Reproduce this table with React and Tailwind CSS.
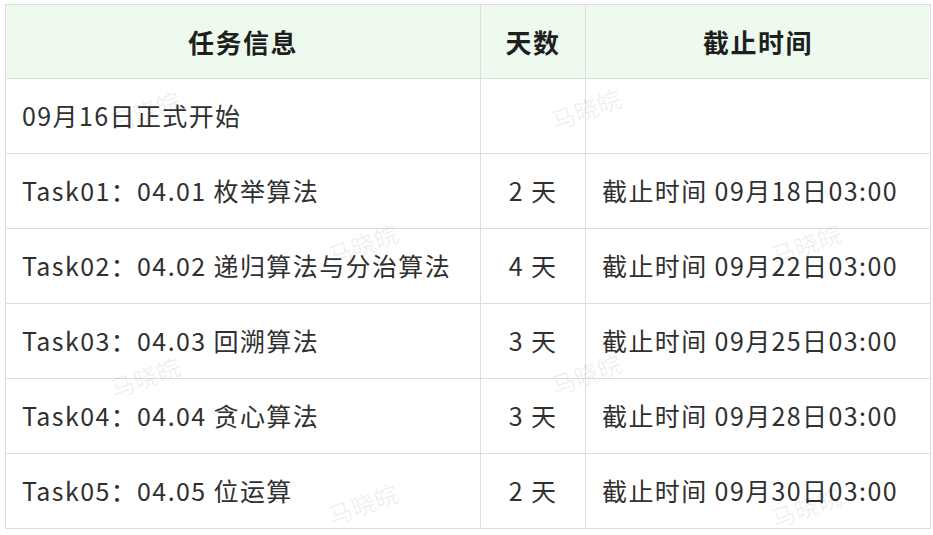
import React from "react";

const rows = [
  ["Task01：04.01 枚举算法", "2 天", "截止时间 09月18日03:00"],
  ["Task02：04.02 递归算法与分治算法", "4 天", "截止时间 09月22日03:00"],
  ["Task03：04.03 回溯算法", "3 天", "截止时间 09月25日03:00"],
  ["Task04：04.04 贪心算法", "3 天", "截止时间 09月28日03:00"],
  ["Task05：04.05 位运算", "2 天", "截止时间 09月30日03:00"],
];

const marks = [
  [147, 112],
  [588, 110],
  [365, 245],
  [808, 245],
  [147, 378],
  [588, 375],
  [365, 505],
  [808, 508],
];

export default function App() {
  return (
    <div
      className="relative w-[933px] h-[535px] bg-white overflow-hidden pt-[4px] pl-[5px]"
      style={{ fontFamily: '"Noto Sans CJK SC", "Noto Sans", sans-serif' }}
    >
      <table className="table-fixed border-collapse w-[925px] text-[25px] text-[#303030]">
        <colgroup>
          <col className="w-[475px]" />
          <col className="w-[105px]" />
          <col className="w-[345px]" />
        </colgroup>
        <thead>
          <tr className="h-[74px] bg-[#eefaee]">
            <th className="border border-[#dcdde0] font-bold text-[26px] tracking-[1.5px] text-[#1f1f1f] text-center">任务信息</th>
            <th className="border border-[#dcdde0] font-bold text-[26px] tracking-[1.5px] text-[#1f1f1f] text-center">天数</th>
            <th className="border border-[#dcdde0] font-bold text-[26px] tracking-[1.5px] text-[#1f1f1f] text-center">截止时间</th>
          </tr>
        </thead>
        <tbody>
          <tr className="h-[75px]">
            <td className="border border-[#dcdde0] px-[16px] tracking-[1.4px]">09月16日正式开始</td>
            <td className="border border-[#dcdde0]"></td>
            <td className="border border-[#dcdde0]"></td>
          </tr>
          {rows.map((r, i) => (
            <tr key={i} className="h-[75px]">
              <td className="border border-[#dcdde0] px-[16px] tracking-[1.4px] whitespace-nowrap">{r[0]}</td>
              <td className="border border-[#dcdde0] text-center tracking-[1.4px]">{r[1]}</td>
              <td className="border border-[#dcdde0] px-[16px] tracking-[1.4px] whitespace-nowrap">{r[2]}</td>
            </tr>
          ))}
        </tbody>
      </table>
      {marks.map(([x, y], i) => (
        <div
          key={i}
          className="absolute pointer-events-none text-[24px] text-[#000000]/[0.07] -rotate-[20deg] whitespace-nowrap leading-none"
          style={{ left: x - 38, top: y - 13 }}
        >
          马晓皖
        </div>
      ))}
    </div>
  );
}
